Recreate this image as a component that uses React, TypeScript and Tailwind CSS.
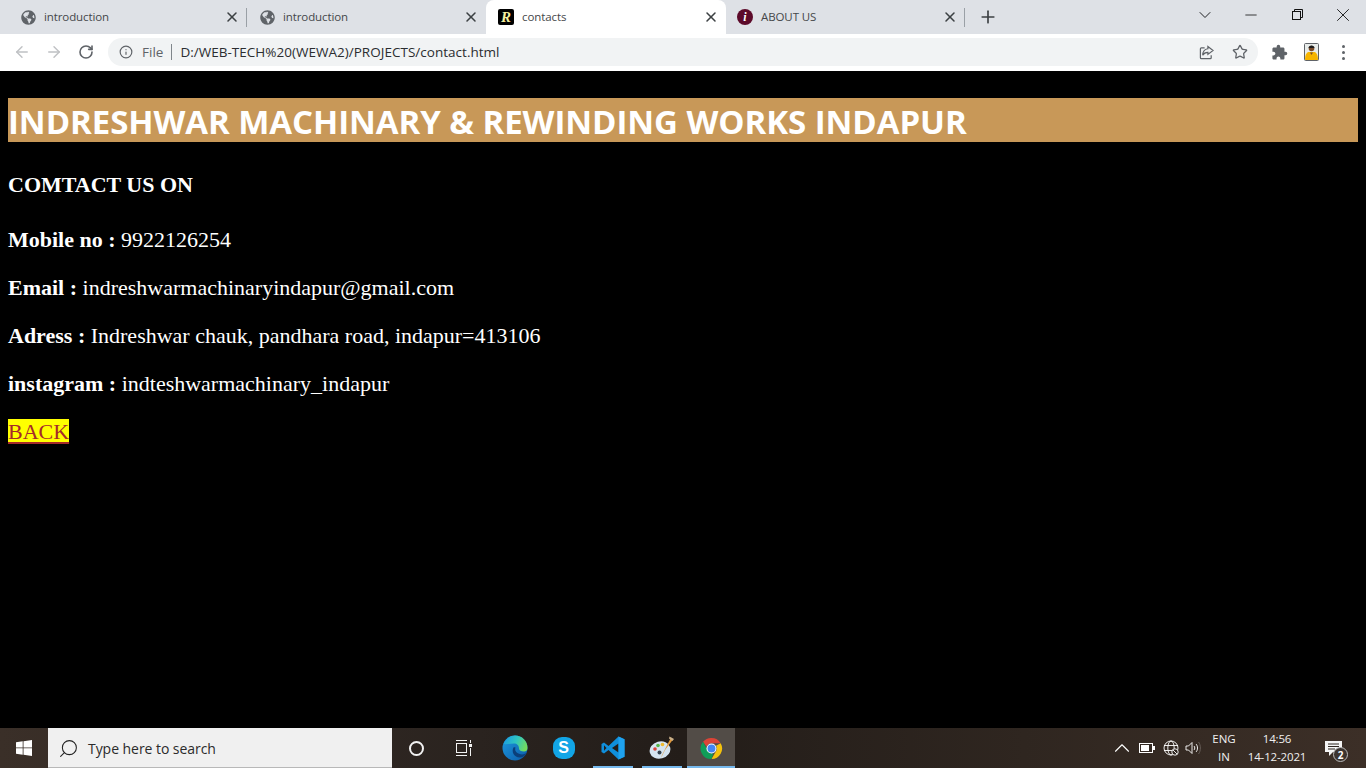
import { ArrowLeft, ArrowRight, ChevronDown, ChevronUp, Info, Minus, Plus, RotateCw, Search, Star, X } from 'lucide-react'
import { FaGlobeAmericas } from 'react-icons/fa'
import { MdExtension } from 'react-icons/md'
import type { ReactNode } from 'react'

const uiFont = "font-['Open_Sans','Noto_Sans',sans-serif]"

function Tab({ title, icon, active, divider, className }: { title: string; icon: ReactNode; active?: boolean; divider?: boolean; className?: string }) {
  return (
    <div className={`flex h-full shrink-0 items-center ${active ? 'rounded-t-[8px] bg-white' : ''} ${className ?? 'w-[239px] pl-[12px]'}`}>
      <span className="flex h-4 w-4 shrink-0 items-center justify-center">{icon}</span>
      <span className={`ml-[8px] flex-1 text-[11.5px] text-[#45474a] tracking-[-0.1px] ${uiFont}`}>{title}</span>
      <span className="flex w-[13px] justify-center">
        <X size={16} strokeWidth={2.3} className="shrink-0 text-[#3c4043]" />
      </span>
      <span className={`ml-[8px] h-[19px] w-px ${divider ? 'bg-[#9aa0a6]' : ''}`} />
    </div>
  )
}

const globe = <FaGlobeAmericas size={15} className="text-[#5f6368]" />

function RLogo() {
  return (
    <span className="flex h-4 w-4 items-center justify-center rounded-[2px] bg-black font-['Liberation_Serif',serif] text-[15px] font-bold italic leading-none text-[#f5f0a0]">
      R
    </span>
  )
}

function InfoLogo() {
  return (
    <span className="flex h-4 w-4 items-center justify-center rounded-full bg-[#5c0a2a] font-['Liberation_Serif',serif] text-[12px] font-bold italic leading-none text-white">
      i
    </span>
  )
}

function TaskIcon({ children, line, active, className }: { children: ReactNode; line?: boolean; active?: boolean; className?: string }) {
  return (
    <div className={`relative flex h-full items-center justify-center ${active ? 'bg-[#524c47]' : ''} ${className ?? 'w-[49px]'}`}>
      {children}
      {line && <span className={`absolute bottom-0 h-[2px] bg-[#76b9ed] ${active ? 'inset-x-0' : 'w-10'}`} />}
    </div>
  )
}

function Edge() {
  return (
    <svg width="26" height="26" viewBox="0 0 26 26">
      <defs>
        <linearGradient id="edgeA" x1="0" y1="0.3" x2="1" y2="0.6">
          <stop offset="0" stopColor="#1b9de2" />
          <stop offset="0.5" stopColor="#2fc6c0" />
          <stop offset="1" stopColor="#76dc5a" />
        </linearGradient>
        <linearGradient id="edgeB" x1="0" y1="0" x2="1" y2="1">
          <stop offset="0" stopColor="#1d9be0" />
          <stop offset="1" stopColor="#0c5aa8" />
        </linearGradient>
      </defs>
      <circle cx="13" cy="13" r="12.500" fill="url(#edgeB)" />
      <path d="M1.500 9C4 3 9 .5 13 .5 20 .5 25.500 6 25.500 13c0 2.500-1.500 3.500-3.500 3.500-3 0-5-1-5-3 0-3-2-5-5-5-4 0-7 1-10.500.500z" fill="url(#edgeA)" />
      <path d="M11.500 12.500c-2.500 4.500 1 10 6 10 3 0 5.500-1.500 7-4.500-2 1.500-5 1.800-7.500.800-3-1.100-4.500-3.500-3.500-6.300-.8-.2-1.500-.2-2 0z" fill="#0b3f7a" />
    </svg>
  )
}

function VsCode() {
  return (
    <svg width="24" height="24" viewBox="0 0 24 24">
      <path d="M17.500 0.500 23.500 3.300V20.700L17.500 23.500 7.500 14 3 17.500 0.500 16V8L3 6.500 7.500 10z" fill="#0f8fdc" />
      <path d="M17.500 7.500 11 12l6.500 4.500z" fill="#231d19" />
      <path d="M17.500 0.500 23.500 3.300V20.700L17.500 23.500z" fill="#1fa2ef" />
      <path d="M3 9.200 5.500 12 3 14.800z" fill="#231d19" />
    </svg>
  )
}

function Palette() {
  return (
    <svg width="26" height="26" viewBox="0 0 26 26">
      <ellipse cx="11" cy="15" rx="10.500" ry="8.500" fill="#d5e4f0" transform="rotate(-15 11 15)" />
      <circle cx="6" cy="14" r="1.800" fill="#d8443a" />
      <circle cx="9" cy="10.500" r="1.800" fill="#56b548" />
      <circle cx="13.500" cy="9.500" r="1.800" fill="#f0b92c" />
      <circle cx="10.500" cy="17.500" r="2" fill="#33424f" />
      <path d="M22 2.500 24 4.500 16 15l-4 8 1-3z" fill="#e0983a" />
      <path d="M20.500 1.500 25 4 23.500 6 20 3.500z" fill="#c9b08a" />
    </svg>
  )
}

function Chrome() {
  return (
    <svg width="23" height="23" viewBox="0 0 48 48">
      <path d="M24 2a22 22 0 0 1 19.100 11H24a11 11 0 0 0-10.400 7.400L6.300 10A22 22 0 0 1 24 2z" fill="#db4437" />
      <path d="M43.100 13A22 22 0 0 1 24 46l9.500-16.500A11 11 0 0 0 33.500 18z" fill="#f4c20d" />
      <path d="M24 46A22 22 0 0 1 6.300 10l9.500 17a11 11 0 0 0 12 7.300z" fill="#0f9d58" />
      <circle cx="24" cy="24" r="10.500" fill="#fff" />
      <circle cx="24" cy="24" r="8.300" fill="#4285f4" />
    </svg>
  )
}

function Avatar() {
  return (
    <svg width="15" height="18" viewBox="0 0 15 18">
      <rect x="0.500" y="0.500" width="14" height="17" rx="1" fill="#e8ecea" stroke="#5f6368" />
      <path d="M1 17c0-5 1.500-7.500 3.500-8h6c2 .500 3.500 3 3.500 8z" fill="#f7b500" />
      <circle cx="7.500" cy="5.500" r="2.800" fill="#7a4a28" />
      <path d="M4.500 5c0-3.500 6-3.500 6 0z" fill="#1c1c1c" />
      <path d="M6 9.500h3L7.500 12z" fill="#7a4a28" />
    </svg>
  )
}

function Label({ text, value }: { text: string; value: string }) {
  return (
    <p className="mb-[23px] text-[22px] leading-[25px] text-white">
      <b>{text} : </b>
      {value}
    </p>
  )
}

export default function App() {
  return (
    <div className="flex h-[768px] w-[1366px] flex-col overflow-hidden bg-black">
      {/* tab strip */}
      <div className="flex h-[34px] shrink-0 items-stretch bg-[#dee1e6] pl-2">
        <Tab title="introduction" icon={globe} divider />
        <Tab title="introduction" icon={globe} />
        <Tab title="contacts" icon={<RLogo />} active className="w-[240px] pl-[12px]" />
        <Tab title="ABOUT US" icon={<InfoLogo />} divider className="w-[239px] pl-[11px]" />
        <div className="flex w-[45px] items-center justify-center">
          <Plus size={20} strokeWidth={2} className="text-[#3c4043]" />
        </div>
        <div className="ml-auto flex items-center pb-[5px]">
          <ChevronDown size={20} strokeWidth={1.2} className="mr-[13px] text-[#202124]" />
          <div className="flex w-[46px] justify-center">
            <Minus size={18} strokeWidth={1} className="text-black" />
          </div>
          <div className="flex w-[46px] justify-center">
            <svg width="11" height="11" viewBox="0 0 11 11" fill="none" stroke="#111">
              <rect x="0.500" y="2.500" width="8" height="8" />
              <path d="M2.500 2.500V0.500H10.500V8.500H8.500" />
            </svg>
          </div>
          <div className="flex w-[46px] justify-center">
            <X size={22} strokeWidth={0.9} className="text-black" />
          </div>
        </div>
      </div>

      {/* toolbar */}
      <div className="flex h-[37px] shrink-0 items-center bg-white pl-[13px] pb-[1px]">
        <ArrowLeft size={18} strokeWidth={1.9} className="text-[#bfc1c4]" />
        <ArrowRight size={18} strokeWidth={1.9} className="ml-[14px] text-[#bfc1c4]" />
        <RotateCw size={16} strokeWidth={2.4} className="ml-[15px] text-[#5f6368]" />
        <div className={`ml-[14px] flex h-[28px] w-[1150px] items-center rounded-full bg-[#f1f3f4] pl-[11px] pr-[10px] text-[13.5px] ${uiFont}`}>
          <Info size={14} strokeWidth={2} className="text-[#5f6368]" />
          <span className="ml-[9px] pt-[1px] text-[#5f6368]">File</span>
          <span className="ml-[8px] mr-[8px] h-[16px] w-px bg-[#80868b]" />
          <span className="pt-[1px] text-[#2b2d30] tracking-[0.02px]">D:/WEB-TECH%20(WEWA2)/PROJECTS/contact.html</span>
          <svg className="ml-auto" width="15" height="15" viewBox="0 0 16 16" fill="none" stroke="#5f6368" strokeWidth="1.300">
            <path d="M6 3H2.500A1 1 0 0 0 1.500 4v9.500a1 1 0 0 0 1 1H12a1 1 0 0 0 1-1V11" />
            <path d="M9.500 1.500 15 5.800 9.500 10V7.800C7 7.800 5 8.800 4 11c0-4 2-6.500 5.500-7z" />
          </svg>
          <Star size={16} strokeWidth={1.9} className="ml-[18px] text-[#5f6368]" />
        </div>
        <MdExtension size={17} className="ml-[13px] text-[#5f6368]" />
        <span className="ml-[16px]">
          <Avatar />
        </span>
        <span className="ml-[23px] flex flex-col gap-[3px]">
          <span className="h-[3px] w-[3px] rounded-full bg-[#5f6368]" />
          <span className="h-[3px] w-[3px] rounded-full bg-[#5f6368]" />
          <span className="h-[3px] w-[3px] rounded-full bg-[#5f6368]" />
        </span>
      </div>

      {/* page */}
      <div className="flex-1 px-2 pt-[27px] font-['Liberation_Serif',serif]">
        <h1 className={`h-[44px] bg-[#c89858] text-[33px] font-bold leading-[48px] text-white tracking-[-0.06px] ${uiFont}`}>
          INDRESHWAR MACHINARY &amp; REWINDING WORKS INDAPUR
        </h1>
        <h3 className="mb-[30px] mt-[30px] text-[22px] font-bold leading-[25px] text-white">COMTACT US ON</h3>
        <Label text="Mobile no" value="9922126254" />
        <Label text="Email" value="indreshwarmachinaryindapur@gmail.com" />
        <Label text="Adress" value="Indreshwar chauk, pandhara road, indapur=413106" />
        <Label text="instagram" value="indteshwarmachinary_indapur" />
        <a className="block h-6 w-fit bg-[#ffff00] text-[22px] leading-[26px] text-[#a52a2a] underline decoration-2 underline-offset-[3px]">BACK</a>
      </div>

      {/* taskbar */}
      <div className="flex h-10 shrink-0 items-stretch bg-[linear-gradient(90deg,#3a2f28_0%,#2a231f_35%,#231d19_50%,#2f2620_75%,#3c2f27_100%)]">
        <div className="flex w-12 items-center justify-center">
          <svg width="16" height="16" viewBox="0 0 16 16" fill="#fff">
            <path d="M0 2.300 6.700 1.300V7.500H0zM7.500 1.200 16 0V7.500H7.500zM0 8.300H6.700V14.700L0 13.700zM7.500 8.300H16V16L7.500 14.800z" />
          </svg>
        </div>
        <div className={`flex w-[344px] items-center border-b border-[#b8b8b8] bg-[#f0f0f0] pl-[10px] pt-[1px] text-[14px] text-[#2b2b2b] ${uiFont}`}>
          <Search size={21} strokeWidth={1.2} className="-scale-x-100 text-[#222]" />
          <span className="ml-[9px] tracking-[-0.05px]">Type here to search</span>
        </div>
        <TaskIcon className="w-12">
          <span className="h-[15px] w-[15px] rounded-full border-2 border-[#f2f2f2]" />
        </TaskIcon>
        <TaskIcon className="w-12">
          <svg width="16" height="16" viewBox="0 0 16 16" fill="none" stroke="#f2f2f2">
            <path d="M0 0.500H11M0 15.500H11" />
            <rect x="0.500" y="3.500" width="10" height="9" />
            <path d="M14.500 0V3M14.500 8V16" />
            <rect x="13" y="4" width="3" height="3" fill="#f2f2f2" stroke="none" />
          </svg>
        </TaskIcon>
        <TaskIcon className="ml-[2px] w-[49px]">
          <Edge />
        </TaskIcon>
        <TaskIcon>
          <span className="flex h-[22px] w-[22px] items-center justify-center rounded-[9px] bg-[#12a5e6] font-['Liberation_Sans',sans-serif] text-[16px] font-bold text-white">
            S
          </span>
        </TaskIcon>
        <TaskIcon line>
          <VsCode />
        </TaskIcon>
        <TaskIcon line>
          <Palette />
        </TaskIcon>
        <TaskIcon line active className="ml-[1px] w-12">
          <Chrome />
        </TaskIcon>

        <div className={`ml-auto flex items-center text-[11.5px] text-[#f0f0f0] ${uiFont}`}>
          <ChevronUp size={26} strokeWidth={1} className="-mx-[4px] text-white" />
          <svg className="ml-[8px]" width="16" height="10" viewBox="0 0 16 10">
            <rect x="0.500" y="0.500" width="13" height="9" fill="none" stroke="#fff" />
            <rect x="14" y="3" width="2" height="4" fill="#fff" />
            <rect x="2" y="2" width="8" height="6" fill="#fff" />
          </svg>
          <svg className="ml-[8px]" width="16" height="16" viewBox="0 0 16 16" fill="none" stroke="#fff" strokeWidth="0.900">
            <circle cx="8" cy="8" r="7" />
            <ellipse cx="8" cy="8" rx="3.200" ry="7" />
            <path d="M1 5.500H15M1 10.500H15" />
            <circle cx="12" cy="12" r="3.200" fill="#2f2620" />
            <path d="M10 10 14 14" />
          </svg>
          <svg className="ml-[6px]" width="16" height="14" viewBox="0 0 16 14" fill="none" stroke="#fff" strokeWidth="0.900">
            <path d="M1 5H3.500L7 1.500V12.500L3.500 9H1z" />
            <path d="M9 5c1 1 1 3 0 4" />
            <path d="M11 3c2 2 2 6 0 8" />
            <path d="M13.500 1c2.500 3 2.500 9 0 12" stroke="#6a625c" />
          </svg>
          <div className="ml-[8px] flex w-[30px] flex-col items-center leading-[18px]">
            <span>ENG</span>
            <span>IN</span>
          </div>
          <div className="ml-[3px] flex w-[70px] flex-col items-center leading-[18px] tracking-[-0.15px]">
            <span>14:56</span>
            <span>14-12-2021</span>
          </div>
          <div className="relative ml-[9px] mr-[21px] flex h-full w-[24px] items-center justify-center">
            <svg width="17" height="15" viewBox="0 0 17 15" fill="#f5f5f5">
              <path d="M0 0H17V11H8L4 15V11H0z" />
              <path d="M3 3H14M3 5.500H14M3 8H10" stroke="#2f2620" />
            </svg>
            <span className="absolute bottom-[6px] right-[-3px] flex h-[15px] w-[15px] items-center justify-center rounded-full border border-[#bbb] bg-[#3c3430] text-[10px] font-bold leading-none text-white">
              2
            </span>
          </div>
        </div>
      </div>
    </div>
  )
}
